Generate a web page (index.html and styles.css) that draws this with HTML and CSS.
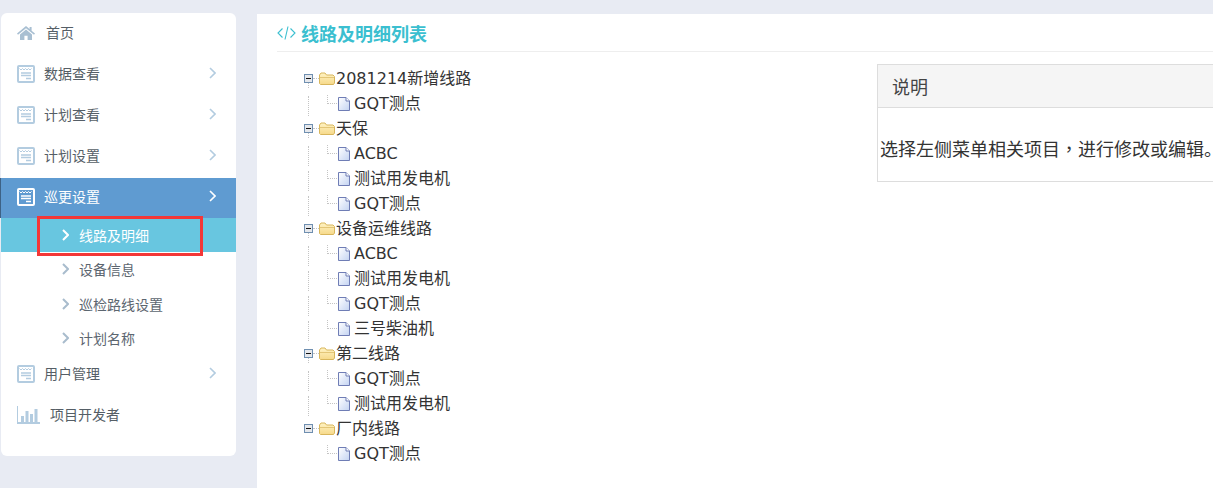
FILE: index.html
```html
<!DOCTYPE html>
<html lang="zh-CN">

<head>
    <meta charset="UTF-8">
    <title>线路及明细列表</title>
    <link rel="stylesheet" href="styles.css">
</head>

<body>
    <svg class="defs" width="0" height="0">
        <defs>
            <linearGradient id="g-folder" x1="0" y1="0" x2="0" y2="1">
                <stop offset="0" stop-color="#fff3c4" />
                <stop offset="1" stop-color="#f6d98a" />
            </linearGradient>
            <linearGradient id="g-file" x1="0" y1="0" x2="1" y2="1">
                <stop offset="0" stop-color="#ffffff" />
                <stop offset="1" stop-color="#c3d3f2" />
            </linearGradient>
        </defs>
        <symbol id="i-home" viewBox="0 0 18 14">
            <path d="M9 0 L12.6 3 V1 H14.6 V4.7 L18 7.6 L17 8.7 L9 2.2 L1 8.7 L0 7.6 Z" fill="currentColor" />
            <path d="M3 8.4 L9 3.5 L15 8.4 V14 H10.6 V9.8 H7.4 V14 H3 Z" fill="currentColor" />
        </symbol>
        <symbol id="i-note" viewBox="0 0 18 18">
            <rect x="1" y="1" width="16" height="16" rx="1" fill="none" stroke="currentColor" stroke-width="2" />
            <path d="M2.5 3.5 L4 5 L5.5 3.5 L7 5 L8.5 3.5 L10 5 L11.5 3.5 L13 5 L14.5 3.5" fill="none" stroke="currentColor" stroke-width="1" />
            <path d="M4 8 H14 M4 10.5 H14 M9 13.5 H14" fill="none" stroke="currentColor" stroke-width="1.3" />
        </symbol>
        <symbol id="i-bars" viewBox="0 0 23 18">
            <path d="M0 0 H1 V16 H23 V18 H0 Z" fill="currentColor" />
            <rect x="4" y="10" width="3" height="6" fill="currentColor" />
            <rect x="8.5" y="5" width="3" height="11" fill="currentColor" />
            <rect x="13" y="8" width="3" height="8" fill="currentColor" />
            <rect x="17.5" y="3" width="3" height="13" fill="currentColor" />
        </symbol>
        <symbol id="i-chev" viewBox="0 0 7 12">
            <path d="M1 1 L6 6 L1 11" fill="none" stroke="currentColor" />
        </symbol>
        <symbol id="i-code" viewBox="0 0 19 14">
            <path d="M5.5 2.5 L1 7 L5.5 11.5 M13.5 2.5 L18 7 L13.5 11.5 M11 0.5 L8 13.5" fill="none" stroke="currentColor" stroke-width="1.1" />
        </symbol>
        <symbol id="i-switch" viewBox="0 0 9 9">
            <rect x="0.5" y="0.5" width="8" height="8" fill="#e6e8ec" stroke="#6f8fb0" />
            <path d="M2 4.5 H7" stroke="#111" stroke-width="1" />
        </symbol>
        <symbol id="i-folder" viewBox="0 0 16 13">
            <path d="M0.5 11.5 V3 L2 1 H6 L7.5 3 H14 L15.5 4.5 V11 L14.5 12.5 H1.5 Z" fill="url(#g-folder)" stroke="#d8b65c" />
            <path d="M1 5.5 H15" stroke="#e3c678" />
        </symbol>
        <symbol id="i-file" viewBox="0 0 12 14">
            <path d="M0.5 0.5 H8 L11.5 4 V13.5 H0.5 Z" fill="url(#g-file)" stroke="#6f7db5" />
            <path d="M8 0.5 V4 H11.5" fill="#fff" stroke="#6f7db5" />
        </symbol>
    </svg>

    <div class="layout">
        <div class="sidebar">
            <a class="menu-item"><svg class="ico-home"><use href="#i-home" /></svg><span class="home-label">首页</span></a>
            <a class="menu-item"><svg class="ico-note"><use href="#i-note" /></svg><span>数据查看</span><svg class="chev"><use href="#i-chev" /></svg></a>
            <a class="menu-item"><svg class="ico-note"><use href="#i-note" /></svg><span>计划查看</span><svg class="chev"><use href="#i-chev" /></svg></a>
            <a class="menu-item"><svg class="ico-note"><use href="#i-note" /></svg><span>计划设置</span><svg class="chev"><use href="#i-chev" /></svg></a>
            <a class="menu-item open"><svg class="ico-note"><use href="#i-note" /></svg><span>巡更设置</span><svg class="chev"><use href="#i-chev" /></svg></a>
            <div class="submenu">
                <a class="sub-item active"><svg class="sub-chev"><use href="#i-chev" /></svg><span>线路及明细</span></a>
                <a class="sub-item"><svg class="sub-chev"><use href="#i-chev" /></svg><span>设备信息</span></a>
                <a class="sub-item"><svg class="sub-chev"><use href="#i-chev" /></svg><span>巡检路线设置</span></a>
                <a class="sub-item"><svg class="sub-chev"><use href="#i-chev" /></svg><span>计划名称</span></a>
            </div>
            <a class="menu-item"><svg class="ico-note"><use href="#i-note" /></svg><span>用户管理</span><svg class="chev"><use href="#i-chev" /></svg></a>
            <a class="menu-item"><svg class="ico-bars"><use href="#i-bars" /></svg><span class="dev-label">项目开发者</span></a>
        </div>

        <div class="main">
            <div class="page-title"><svg class="ico-code"><use href="#i-code" /></svg><h1>线路及明细列表</h1></div>
            <div class="content">
                <ul class="tree">
                    <li class="node"><svg class="switch"><use href="#i-switch" /></svg><svg class="folder"><use href="#i-folder" /></svg>2081214新增线路</li>
                    <li class="leaf"><svg class="file"><use href="#i-file" /></svg>GQT测点</li>
                    <li class="node"><svg class="switch"><use href="#i-switch" /></svg><svg class="folder"><use href="#i-folder" /></svg>天保</li>
                    <li class="leaf"><svg class="file"><use href="#i-file" /></svg>ACBC</li>
                    <li class="leaf"><svg class="file"><use href="#i-file" /></svg>测试用发电机</li>
                    <li class="leaf"><svg class="file"><use href="#i-file" /></svg>GQT测点</li>
                    <li class="node"><svg class="switch"><use href="#i-switch" /></svg><svg class="folder"><use href="#i-folder" /></svg>设备运维线路</li>
                    <li class="leaf"><svg class="file"><use href="#i-file" /></svg>ACBC</li>
                    <li class="leaf"><svg class="file"><use href="#i-file" /></svg>测试用发电机</li>
                    <li class="leaf"><svg class="file"><use href="#i-file" /></svg>GQT测点</li>
                    <li class="leaf"><svg class="file"><use href="#i-file" /></svg>三号柴油机</li>
                    <li class="node"><svg class="switch"><use href="#i-switch" /></svg><svg class="folder"><use href="#i-folder" /></svg>第二线路</li>
                    <li class="leaf"><svg class="file"><use href="#i-file" /></svg>GQT测点</li>
                    <li class="leaf"><svg class="file"><use href="#i-file" /></svg>测试用发电机</li>
                    <li class="node last"><svg class="switch"><use href="#i-switch" /></svg><svg class="folder"><use href="#i-folder" /></svg>厂内线路</li>
                    <li class="leaf last"><svg class="file"><use href="#i-file" /></svg>GQT测点</li>
                </ul>
                <div class="panel">
                    <div class="panel-heading">说明</div>
                    <div class="panel-body">选择左侧菜单相关项目<span class="comma" lang="zh-TW">，</span>进行修改或编辑<span class="full-stop">。</span></div>
                </div>
            </div>
        </div>
    </div>
</body>

</html>
```

FILE: styles.css
```css
html,
body {
    height: 100%;
}

body {
    margin: 0;
    background-color: #e8ebf3;
    color: #333;
    font-family: "DejaVu Sans", "Noto Sans CJK SC", sans-serif;
    overflow: hidden;
}

.defs {
    display: block;
}

.layout {
    display: flex;
    align-items: flex-start;
    padding: 13px 0 0 1px;
    height: 475px;
}

/* sidebar */
.sidebar {
    flex: none;
    width: 235px;
    height: 443px;
    background-color: #fff;
    border-radius: 6px;
}

.menu-item {
    display: flex;
    align-items: center;
    box-sizing: border-box;
    height: 41px;
    padding: 0 0 1px 16px;
    font-size: 14px;
    color: #555e66;
}

.menu-item span {
    margin-bottom: 2px;
}

.menu-item svg {
    color: #b3cce0;
}

.menu-item .ico-home {
    width: 18px;
    height: 14px;
    margin-right: 11px;
    color: #a8bfd2;
}

.ico-note {
    width: 18px;
    height: 18px;
    margin-right: 9px;
}

.ico-bars {
    width: 23px;
    height: 18px;
    margin-right: 10px;
}

.chev {
    width: 7px;
    height: 12px;
    margin-left: auto;
    margin-right: 20px;
    margin-bottom: 2px;
    stroke-width: 1.6;
}

.menu-item.open {
    height: 40px;
    margin-top: 1px;
    padding-bottom: 2px;
    background-color: #5f9bd1;
    box-shadow: -1px 0 0 #3d6285;
    color: #fff;
}

.menu-item.open svg {
    color: #fff;
}

.submenu {
    height: 136px;
}

.sub-item {
    display: flex;
    align-items: center;
    height: 34.5px;
    padding-left: 61px;
    font-size: 14px;
    color: #5c6670;
}

.sub-chev {
    width: 7px;
    height: 12px;
    margin-right: 10px;
    color: #a9bccd;
    stroke-width: 2;
}

.sub-item.active {
    position: relative;
    height: 34px;
    background-color: #68c6e0;
    color: #fff;
}

.sub-item.active .sub-chev {
    color: #fff;
}

/* the red annotation box drawn over the screenshot */
.sub-item.active::after {
    content: "";
    position: absolute;
    left: 36px;
    top: -2px;
    width: 160px;
    height: 34px;
    border: 3px solid #f33737;
}

/* main area */
.main {
    flex: none;
    width: 956px;
    height: 475px;
    margin-left: 21px;
    margin-top: 1px;
    background-color: #fff;
    overflow: hidden;
}

.page-title {
    display: flex;
    align-items: center;
    height: 37px;
    margin-left: 20px;
    border-bottom: 1px solid #eee;
}

.ico-code {
    width: 19px;
    height: 14px;
    margin-right: 5px;
    color: #3bbfd0;
}

.page-title h1 {
    margin: 0;
    font-size: 18px;
    font-weight: 700;
    color: #3bbfd0;
}

.content {
    display: flex;
    align-items: flex-start;
}

/* tree */
.tree {
    flex: none;
    list-style: none;
    width: 620px;
    margin: 14px 0 0;
    padding: 0;
    font-size: 16px;
    line-height: 25px;
    color: #333;
}

.tree li {
    position: relative;
    display: flex;
    align-items: center;
    height: 25px;
    white-space: nowrap;
}

.node {
    padding-left: 47px;
}

.leaf {
    padding-left: 81px;
}

.switch {
    width: 9px;
    height: 9px;
    margin-right: 6px;
}

.folder {
    width: 16px;
    height: 13px;
    margin-right: 1px;
}

.file {
    width: 12px;
    height: 14px;
    margin-right: 4px;
}

/* dotted connectors */
.node::before {
    content: "";
    position: absolute;
    left: 51px;
    top: 17px;
    height: 5px;
    border-left: 1px dotted #c4c4c4;
}

.node.last::before {
    display: none;
}

.node::after {
    content: "";
    position: absolute;
    left: 56px;
    top: 12px;
    width: 6px;
    border-top: 1px dotted #c4c4c4;
}

.leaf::before {
    content: "";
    position: absolute;
    left: 51px;
    top: 5px;
    height: 20px;
    border-left: 1px dotted #c4c4c4;
}

.leaf.last::before {
    display: none;
}

.leaf::after {
    content: "";
    position: absolute;
    left: 70px;
    top: 4px;
    width: 9px;
    height: 8px;
    border-left: 1px dotted #c4c4c4;
    border-bottom: 1px dotted #c4c4c4;
}

/* panel */
.panel {
    flex: none;
    width: 420px;
    margin-top: 12px;
    border: 1px solid #ddd;
    border-right: none;
    font-size: 18px;
}

.panel-heading {
    box-sizing: border-box;
    height: 43px;
    padding: 4px 0 0 14px;
    line-height: 38px;
    font-size: 18px;
    color: #444;
    background-color: #f5f5f5;
    border-bottom: 1px solid #ddd;
}

.panel-body {
    height: 73px;
    padding: 24px 2px 0;
    box-sizing: border-box;
    line-height: 32px;
    white-space: nowrap;
}

.comma {
    font-family: "Noto Sans CJK TC", sans-serif;
}

.full-stop {
    letter-spacing: -9px;
}
```
